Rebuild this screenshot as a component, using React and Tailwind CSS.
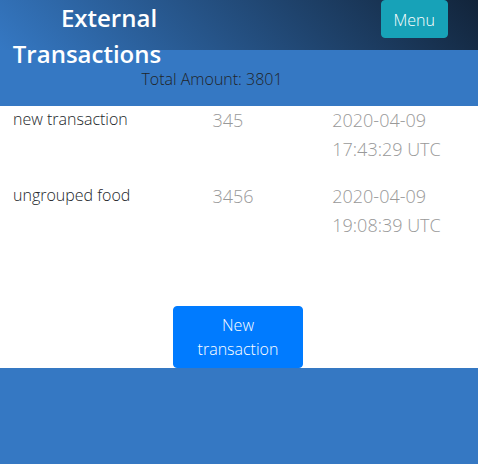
const transactions = [
  { name: 'new transaction', amount: 345, date: '2020-04-09 17:43:29 UTC' },
  { name: 'ungrouped food', amount: 3456, date: '2020-04-09 19:08:39 UTC' },
];

export default function App() {
  const total = transactions.reduce((sum, item) => sum + item.amount, 0);

  return (
    <div className="min-h-screen bg-[#3578c3] font-['Open_Sans',sans-serif] text-base font-light text-[#212529]">
      <header className="flex h-[50px] items-start justify-between bg-[linear-gradient(45deg,#3578c3,#12243a)] pr-[30px] pl-3">
        <h1 className="w-[150px] indent-11 text-center text-2xl leading-9 font-semibold text-white">
          External Transactions
        </h1>
        <button
          type="button"
          className="rounded border border-[#17a2b8] bg-[#17a2b8] px-3 pt-[7px] pb-[5px] text-white"
        >
          Menu
        </button>
      </header>
      <p className="h-14 pt-[17px] pr-[54px] text-center">Total Amount: {total}</p>
      <main className="bg-white">
        <ul className="flex flex-col gap-4">
          {transactions.map((item) => (
            <li key={item.date} className="grid grid-cols-[5fr_3fr_3fr] pr-[26px] pb-0.5 pl-[13px] text-lg leading-[29px] text-[#999999]">
              <span className="text-base leading-[26px] text-[#212529]">{item.name}</span>
              <span>{item.amount}</span>
              <time>{item.date}</time>
            </li>
          ))}
        </ul>
        <div className="flex justify-center pt-16 pr-0.5">
          <button
            type="button"
            className="w-[130px] rounded border border-[#007bff] bg-[#007bff] px-3 py-1.5 text-white"
          >
            New transaction
          </button>
        </div>
      </main>
    </div>
  );
}
